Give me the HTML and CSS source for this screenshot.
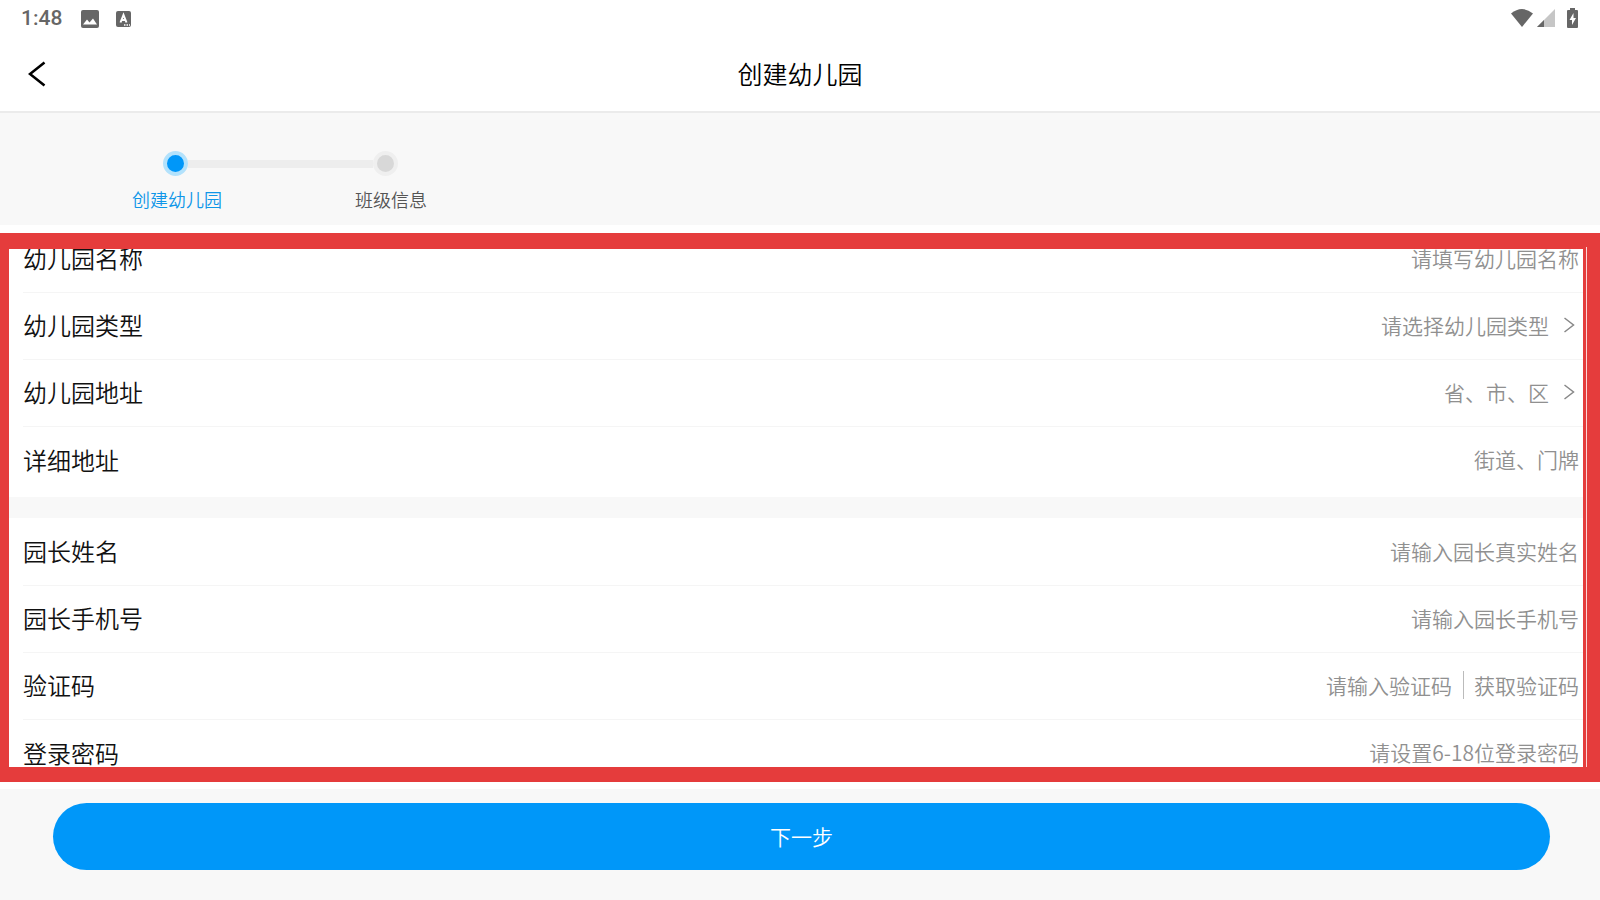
FILE: index.html
```html
<!DOCTYPE html>
<html lang="zh-CN">

<head>
  <meta charset="UTF-8" />
  <meta name="viewport" content="width=device-width, initial-scale=1.0" />
  <title>创建幼儿园</title>
  <link rel="stylesheet" href="styles.css">
</head>

<body>
  <!-- 状态栏 -->
  <div class="status">
    <span class="time">1:48</span>
    <svg class="pic" viewBox="0 0 18 18" width="18" height="18">
      <rect width="18" height="18" rx="2" fill="#666" />
      <path d="M2 14.500l4-5 2.500 3 3.500-4 4 6z" fill="#fff" />
    </svg>
    <svg class="lang" viewBox="0 0 15 16" width="15" height="16">
      <rect width="15" height="16" rx="2" fill="#666" />
      <path d="M4.500 11.500L7.500 4l3 7.500M5.500 9h4" fill="none" stroke="#fff" stroke-width="2" />
      <path d="M8 14h1.500M10.500 14H12M13 14h1" stroke="#fff" stroke-width="1.300" />
    </svg>
    <div class="signal">
      <svg viewBox="0 0 24 20" width="24" height="20">
        <path d="M1 5.500Q12-3.500 23 5.500L12 19z" fill="#666" />
      </svg>
      <svg viewBox="0 0 18 18" width="18" height="18">
        <path d="M0 18L18 0v18z" fill="#c6c6c6" />
        <path d="M0 18l7-7v7z" fill="#666" />
      </svg>
      <svg class="battery" viewBox="0 0 11 20" width="11" height="20">
        <path d="M3 0h5v2h2q1 0 1 1v16q0 1-1 1H1q-1 0-1-1V3q0-1 1-1h2z" fill="#666" />
        <path d="M6.500 5L2.500 12h2.500v5l4-7H6.500z" fill="#fff" />
      </svg>
    </div>
  </div>

  <!-- 标题栏 -->
  <header class="nav">
    <button class="back" type="button" aria-label="返回">
      <svg viewBox="0 0 18 26" width="18" height="26">
        <path d="M16.500 1.500L2 13l14.500 11.500" fill="none" stroke="#000" stroke-width="2.600" />
      </svg>
    </button>
    <h1>创建幼儿园</h1>
  </header>

  <!-- 步骤 -->
  <div class="steps">
    <div class="track">
      <i class="dot on"></i>
      <i class="line"></i>
      <i class="dot"></i>
    </div>
    <div class="names">
      <span class="on">创建幼儿园</span>
      <span>班级信息</span>
    </div>
  </div>

  <!-- 表单 -->
  <form class="form" id="form">
    <div class="group">
      <div class="row">
        <label for="name">幼儿园名称</label>
        <input type="text" id="name" placeholder="请填写幼儿园名称">
      </div>
      <div class="row">
        <label for="type">幼儿园类型</label>
        <select id="type">
          <option>请选择幼儿园类型</option>
        </select>
        <svg class="arrow" viewBox="0 0 12 18" width="12" height="18">
          <path d="M1.500 2l9 7-9 7" fill="none" stroke="#888" stroke-width="1.500" />
        </svg>
      </div>
      <div class="row">
        <label for="area">幼儿园地址</label>
        <select id="area">
          <option>省、市、区</option>
        </select>
        <svg class="arrow" viewBox="0 0 12 18" width="12" height="18">
          <path d="M1.500 2l9 7-9 7" fill="none" stroke="#888" stroke-width="1.500" />
        </svg>
      </div>
      <div class="row">
        <label for="address">详细地址</label>
        <input type="text" id="address" placeholder="街道、门牌">
      </div>
    </div>
    <div class="group leader">
      <div class="row">
        <label for="uname">园长姓名</label>
        <input type="text" id="uname" placeholder="请输入园长真实姓名">
      </div>
      <div class="row">
        <label for="phone">园长手机号</label>
        <input type="tel" id="phone" placeholder="请输入园长手机号">
      </div>
      <div class="row">
        <label for="code">验证码</label>
        <input type="text" id="code" placeholder="请输入验证码">
        <button class="getcode" type="button">获取验证码</button>
      </div>
      <div class="row">
        <label for="pwd">登录密码</label>
        <input type="password" id="pwd" placeholder="请设置6-18位登录密码">
      </div>
    </div>
    <!-- 红色标注框 -->
    <div class="mark"></div>
  </form>

  <footer class="foot">
    <button class="next" type="submit" form="form">下一步</button>
  </footer>
</body>

</html>
```
FILE: styles.css
```css
* {
  margin: 0;
  padding: 0;
  box-sizing: border-box;
}

body {
  display: flex;
  flex-direction: column;
  height: 100vh;
  background: #fff;
  color: #111;
  font-family: "Noto Sans CJK SC", sans-serif;
  font-weight: 350;
}

button,
input,
select {
  border: none;
  outline: none;
  background: none;
  font: inherit;
}

button {
  cursor: pointer;
}

svg {
  display: block;
}

/* 状态栏 */
.status {
  display: flex;
  align-items: center;
  height: 37px;
  padding: 0 22px 0 21px;
  color: #666;
  flex-shrink: 0;
}

.time {
  font: 500 21px/37px Roboto, sans-serif;
}

.pic {
  margin-left: 19px;
}

.lang {
  margin-left: 17px;
}

.signal {
  display: flex;
  align-items: center;
  gap: 3px;
  margin: 0 0 2px auto;
}

.battery {
  margin-left: 9px;
}

/* 标题栏 */
.nav {
  position: relative;
  height: 76px;
  border-bottom: 2px solid #ebebeb;
  flex-shrink: 0;
}

.nav h1 {
  text-align: center;
  color: #000;
  font-size: 25px;
  font-weight: 350;
  line-height: 72px;
}

.back {
  position: absolute;
  left: 28px;
  top: 24px;
}

/* 步骤 */
.steps {
  height: 112px;
  padding-top: 38px;
  background: #f8f8f8;
  flex-shrink: 0;
}

.track {
  display: flex;
  align-items: center;
  width: 398px;
  padding-left: 163px;
}

.dot {
  width: 25px;
  height: 25px;
  border: 4px solid #efefef;
  border-radius: 50%;
  background: #d8d8d8;
}

.dot.on {
  border-color: #b3e2fc;
  background: #0097f9;
}

.line {
  flex: 1;
  height: 8px;
  background: #ededed;
}

.names {
  display: flex;
  gap: 133px;
  padding: 9px 0 0 132px;
  color: #555;
  font-size: 18px;
  line-height: 28px;
}

.names .on {
  color: #0f96e8;
}

/* 表单 */
.form {
  position: relative;
  flex: 1;
  min-height: 0;
  overflow: hidden;
}

.group {
  padding: 1px 0 3px;
}

.leader {
  border-top: 21px solid #f8f8f8;
}

.row {
  display: flex;
  align-items: center;
  height: 67px;
  margin-left: 23px;
  padding: 0 21px 3px 0;
  border-bottom: 1px solid #f5f5f5;
  color: #909090;
  font-size: 21px;
}

.row:last-child {
  border-bottom: none;
}

.row label {
  color: #111;
  font-size: 24px;
}

.row input {
  flex: 1;
  min-width: 0;
  text-align: right;
  color: #333;
}

.row input::placeholder {
  color: #909090;
}

.row select {
  margin-left: auto;
  appearance: none;
  color: #909090;
}

.arrow {
  margin: 0 4px 0 14px;
}

.getcode {
  margin-left: 11px;
  padding-left: 10px;
  border-left: 1px solid #bbb;
  color: #909090;
  line-height: 28px;
}

.mark {
  position: absolute;
  inset: 8px 0 7px;
  border: solid #e53c3c;
  border-width: 16px 17px 15px 9px;
  pointer-events: none;
}

/* 右侧边框里的细白线 */
.mark::after {
  content: '';
  position: absolute;
  top: -2px;
  right: -4px;
  bottom: 0;
  width: 1px;
  background: #fbd5d5;
}

/* 底部按钮 */
.foot {
  height: 111px;
  padding: 14px 50px 0 53px;
  background: #f8f8f8;
  flex-shrink: 0;
}

.next {
  width: 100%;
  height: 67px;
  padding-bottom: 2px;
  border-radius: 34px;
  background: #0097f9;
  color: #fff;
  font-size: 21px;
}
```
